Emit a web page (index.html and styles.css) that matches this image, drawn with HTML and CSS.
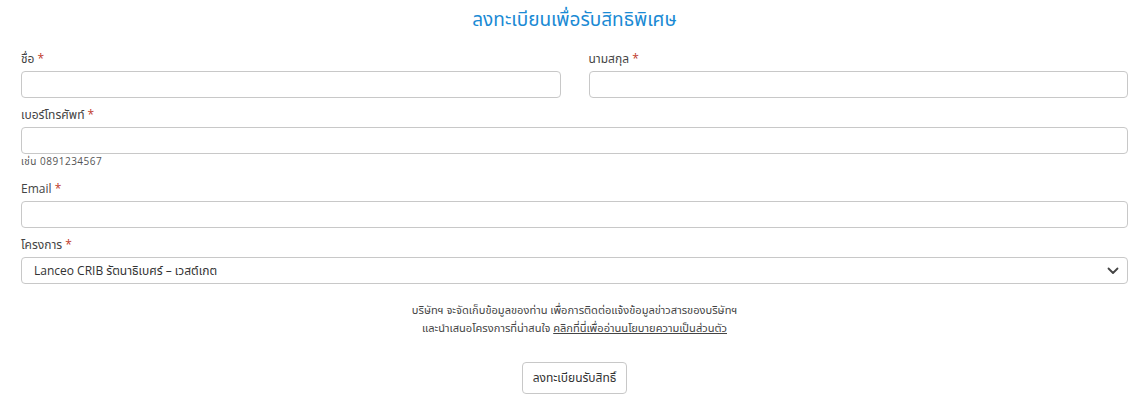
FILE: index.html
```html
<!DOCTYPE html>
<html lang="th">
<head>
<meta charset="UTF-8" />
<meta name="viewport" content="width=device-width, initial-scale=1" />
<title>ลงทะเบียนเพื่อรับสิทธิพิเศษ</title>
<link rel="stylesheet" href="styles.css">
</head>
<body>

<div class="register-form">
  <h2 class="form-title">ลงทะเบียนเพื่อรับสิทธิพิเศษ</h2>

  <div class="form-row two-cols">
    <div class="form-group">
      <label>ชื่อ <span class="req">*</span></label>
      <input type="text" class="form-input" />
    </div>
    <div class="form-group">
      <label>นามสกุล <span class="req">*</span></label>
      <input type="text" class="form-input" />
    </div>
  </div>

  <div class="form-group">
    <label>เบอร์โทรศัพท์ <span class="req">*</span></label>
    <input type="text" class="form-input" />
    <small class="hint">เช่น 0891234567</small>
  </div>

  <div class="form-group">
    <label>Email <span class="req">*</span></label>
    <input type="email" class="form-input" />
  </div>

  <div class="form-group">
    <label>โครงการ <span class="req">*</span></label>
    <div class="select-wrap">
      <select class="form-input form-select">
        <option>Lanceo CRIB รัตนาธิเบศร์ – เวสต์เกต</option>
      </select>
      <svg class="select-arrow" width="12" height="8" viewBox="0 0 12 8">
        <path d="M1.5 1.5 L6 6 L10.5 1.5" fill="none" stroke="#444" stroke-width="1.8" stroke-linecap="round" stroke-linejoin="round"/>
      </svg>
    </div>
  </div>

  <p class="consent">
    บริษัทฯ จะจัดเก็บข้อมูลของท่าน เพื่อการติดต่อแจ้งข้อมูลข่าวสารของบริษัทฯ<br>
    และนำเสนอโครงการที่น่าสนใจ <a href="#">คลิกที่นี่เพื่ออ่านนโยบายความเป็นส่วนตัว</a>
  </p>

  <div class="submit-row">
    <button class="submit-btn">ลงทะเบียนรับสิทธิ์</button>
  </div>
</div>

</body>
</html>
```

FILE: styles.css
```css
body {
  margin: 0;
  font-family: "Open Sans", "Noto Sans Thai", "Noto Sans", sans-serif;
  color: #444;
  background: #fff;
}
.register-form {
  padding: 6px 16px 0 21px;
}
.form-title {
  margin: 0 0 19px;
  text-align: center;
  font-size: 19px;
  font-weight: normal;
  color: #1a8ad4;
  line-height: 26px;
}
.form-row.two-cols {
  display: grid;
  grid-template-columns: 1fr 1fr;
  gap: 0 28px;
}
.form-group {
  display: flex;
  flex-direction: column;
  margin-bottom: 9px;
}
.form-group label {
  font-size: 12px;
  line-height: 16px;
  margin-bottom: 4px;
  color: #444;
}
.req {
  color: #c0392b;
}
.form-input {
  box-sizing: border-box;
  width: 100%;
  height: 27px;
  border: 1px solid #c8c8c8;
  border-radius: 4px;
  background: #fff;
  padding: 2px 12px;
  font-family: inherit;
  font-size: 12px;
  color: #333;
}
.hint {
  font-size: 10px;
  line-height: 14px;
  margin-top: 0;
  margin-bottom: 4px;
  color: #555;
  letter-spacing: 0.5px;
}
.select-wrap {
  position: relative;
}
.form-select {
  appearance: none;
  -webkit-appearance: none;
  padding-right: 30px;
}
.select-arrow {
  position: absolute;
  right: 9px;
  top: 10px;
  pointer-events: none;
}
.consent {
  margin: 17px 0 0;
  text-align: center;
  font-size: 11.1px;
  line-height: 18px;
  color: #444;
}
.consent a {
  color: #444;
  text-decoration: underline;
}
.submit-row {
  display: flex;
  justify-content: center;
  margin-top: 25px;
}
.submit-btn {
  height: 32px;
  padding: 0 10px;
  background: #fff;
  border: 1px solid #c8c8c8;
  border-radius: 4px;
  font-family: inherit;
  font-size: 12px;
  color: #333;
}
```
